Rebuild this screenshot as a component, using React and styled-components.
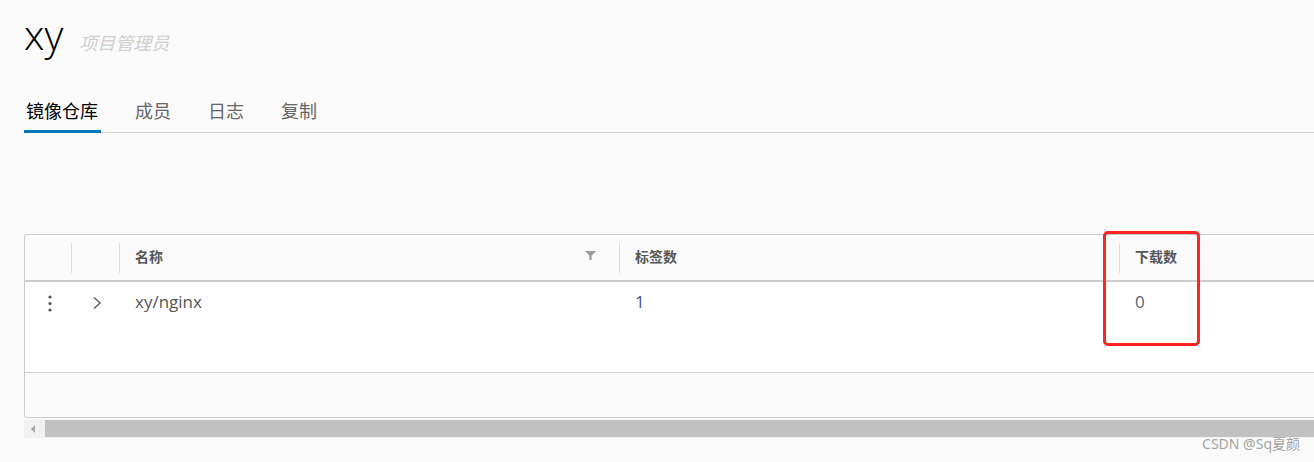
import styled, { createGlobalStyle } from "styled-components";

const GlobalStyle = createGlobalStyle`
  html, body {
    margin: 0;
    background: #fafafa;
    overflow: hidden;
    font-family: "Open Sans", "Noto Sans CJK SC", sans-serif;
  }
`;

const Page = styled.div`
  position: relative;
  height: 462px;
  padding: 10px 0 0 24px;
  box-sizing: border-box;
`;

const Header = styled.div`
  display: flex;
  align-items: baseline;
  height: 48px;
`;

const Title = styled.h1`
  margin: 0;
  font-family: "Open Sans", sans-serif;
  font-weight: 300;
  font-size: 41px;
  line-height: 48px;
  color: #000;
`;

const Role = styled.span`
  margin-left: 16px;
  font-family: "Noto Sans CJK SC", sans-serif;
  font-style: italic;
  font-size: 18px;
  color: #cfcfcf;
`;

const Tabs = styled.nav`
  display: flex;
  gap: 32px;
  margin-top: 34px;
  border-bottom: 1px solid #cccccc;
`;

const Tab = styled.div`
  padding: 0 3px 5px 2px;
  margin-bottom: -1px;
  font-family: "Noto Sans CJK SC", sans-serif;
  font-size: 18px;
  line-height: 36px;
  color: ${(p) => (p.$active ? "#000" : "#666")};
  box-shadow: ${(p) => (p.$active ? "inset 0 -3px 0 #0079b8" : "none")};
`;

const Table = styled.div`
  margin-top: 101px;
  width: 1600px;
  border: 1px solid #cccccc;
  border-right: none;
  border-radius: 3px 0 0 3px;
  background: #fff;
  overflow: hidden;
`;

const Cols = "46px 48px 500px 500px 1fr";

const HeadRow = styled.div`
  display: grid;
  grid-template-columns: ${Cols};
  height: 45px;
  align-items: center;
  background: #fafafa;
  border-bottom: 2px solid #cccccc;
`;

const HeadCell = styled.div`
  display: flex;
  align-items: center;
  justify-content: space-between;
  box-sizing: border-box;
  height: 30px;
  padding: 0 23px 4px 15px;
  border-left: ${(p) => (p.$sep ? "1px solid #dddddd" : "none")};
  font-family: "Noto Sans CJK SC", sans-serif;
  font-weight: 700;
  font-size: 14px;
  color: #565656;
`;

const Row = styled.div`
  display: grid;
  grid-template-columns: ${Cols};
  height: 90px;
  border-bottom: 1px solid #cccccc;
  background: #fff;
`;

const Cell = styled.div`
  padding: ${(p) => (p.$icon ? "9px 0 0 3px" : "8px 15px 0 16px")};
  display: ${(p) => (p.$icon ? "flex" : "block")};
  justify-content: center;
  align-items: flex-start;
  font-family: "Open Sans", sans-serif;
  font-size: 17px;
  line-height: 24px;
  color: ${(p) => p.$color || "#565656"};
`;

const IconSlot = styled.span`
  display: flex;
  align-items: center;
  justify-content: center;
  height: 24px;
`;

const Footer = styled.div`
  height: 44px;
  background: #fafafa;
`;

const Scrollbar = styled.div`
  display: flex;
  width: 1600px;
  height: 18px;
  margin-top: 2px;
  background: #f1f1f1;
`;

const ArrowButton = styled.div`
  display: flex;
  align-items: center;
  justify-content: center;
  width: 21px;
  &::after {
    content: "";
    border-top: 4px solid transparent;
    border-bottom: 4px solid transparent;
    border-right: 4px solid #a3a3a3;
    margin-right: 4px;
  }
`;

const Thumb = styled.div`
  flex: 1;
  height: 17px;
  background: #c1c1c1;
`;

const Highlight = styled.div`
  position: absolute;
  left: 1103px;
  top: 231px;
  width: 97px;
  height: 115px;
  box-sizing: border-box;
  border: 3px solid #ff2424;
  border-radius: 5px;
`;

const Watermark = styled.div`
  position: absolute;
  right: 14px;
  bottom: 9px;
  font-family: "Noto Sans", "Noto Sans CJK SC", sans-serif;
  font-size: 14px;
  color: #a3a3a3;
`;

const Kebab = () => (
  <svg width="4" height="17" viewBox="0 0 4 17">
    <circle cx="2" cy="2" r="1.6" fill="#565656" />
    <circle cx="2" cy="8.5" r="1.6" fill="#565656" />
    <circle cx="2" cy="15" r="1.6" fill="#565656" />
  </svg>
);

const Chevron = () => (
  <svg width="10" height="14" viewBox="0 0 10 14">
    <polyline points="2,1.5 8,7 2,12.5" fill="none" stroke="#666" strokeWidth="1.6" />
  </svg>
);

const Filter = () => (
  <svg width="11" height="9" viewBox="0 0 11 9">
    <path d="M0 0 H11 L6.6 4.4 V9 H4.4 V4.4 Z" fill="#999" />
  </svg>
);

const App = () => {
  return (
    <Page>
      <GlobalStyle />
      <Header>
        <Title>xy</Title>
        <Role>项目管理员</Role>
      </Header>
      <Tabs>
        <Tab $active>镜像仓库</Tab>
        <Tab>成员</Tab>
        <Tab>日志</Tab>
        <Tab>复制</Tab>
      </Tabs>
      <Table>
        <HeadRow>
          <HeadCell />
          <HeadCell $sep />
          <HeadCell $sep>
            名称
            <Filter />
          </HeadCell>
          <HeadCell $sep>标签数</HeadCell>
          <HeadCell $sep>下载数</HeadCell>
        </HeadRow>
        <Row>
          <Cell $icon>
            <IconSlot>
              <Kebab />
            </IconSlot>
          </Cell>
          <Cell $icon>
            <IconSlot>
              <Chevron />
            </IconSlot>
          </Cell>
          <Cell>xy/nginx</Cell>
          <Cell $color="#44518f">1</Cell>
          <Cell $color="#5b6178">0</Cell>
        </Row>
        <Footer />
      </Table>
      <Scrollbar>
        <ArrowButton />
        <Thumb />
      </Scrollbar>
      <Highlight />
      <Watermark>CSDN @Sq夏颜</Watermark>
    </Page>
  );
};

export default App;
